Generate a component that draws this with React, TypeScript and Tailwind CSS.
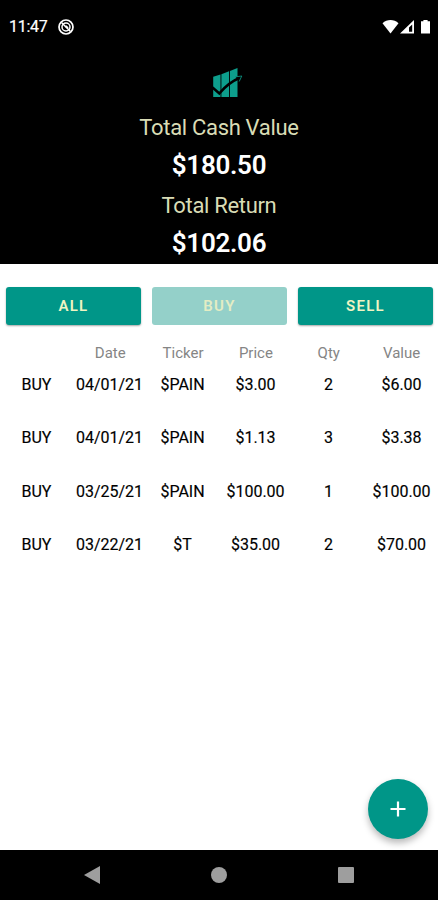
import React, { useState } from 'react';

type Transaction = {
  type: string;
  date: string;
  ticker: string;
  price: string;
  qty: number;
  value: string;
};

const transactions: Transaction[] = [
  { type: 'BUY', date: '04/01/21', ticker: '$PAIN', price: '$3.00', qty: 2, value: '$6.00' },
  { type: 'BUY', date: '04/01/21', ticker: '$PAIN', price: '$1.13', qty: 3, value: '$3.38' },
  { type: 'BUY', date: '03/25/21', ticker: '$PAIN', price: '$100.00', qty: 1, value: '$100.00' },
  { type: 'BUY', date: '03/22/21', ticker: '$T', price: '$35.00', qty: 2, value: '$70.00' },
];

const filters = ['ALL', 'BUY', 'SELL'];
const columns = ['', 'Date', 'Ticker', 'Price', 'Qty', 'Value'];

const StatusBar: React.FC = () => (
  <div className="flex h-[54px] items-center justify-between pl-[9px] pr-[7px] text-white">
    <div className="flex items-center gap-[11px]">
      <span className="text-[16px] leading-[20px] tracking-[-0.3px] [-webkit-text-stroke:0.2px_#fff]">11:47</span>
      <svg width="16" height="16" viewBox="0 0 16 16" fill="none" stroke="currentColor">
        <circle cx="8" cy="8" r="7" strokeWidth="1.7" />
        <circle cx="8" cy="8" r="4" strokeWidth="1.5" />
        <path d="M3.5 3.5l9 9" strokeWidth="1.5" />
        <path d="M7.5 7l2.5 2" strokeWidth="2" />
      </svg>
    </div>
    <svg width="49" height="16" viewBox="0 0 49 16" fill="currentColor">
      <path d="M0.5 4.3C5-.1 12-.1 16.5 4.3L8.5 14.5z" />
      <path d="M18 14.5L32 1v13.5zM27 12.8h3.2V5.5L27 8.6z" fillRule="evenodd" />
      <path d="M39 2.3h2.4V1h4.2v1.3H48v12.2h-9z" />
    </svg>
  </div>
);

const Logo: React.FC = () => (
  <svg width="32" height="31" viewBox="0 0 32 31">
    <g fill="#0d9e8c">
      <path d="M1.2 9.8L8.5 7.5V30H1.2z" />
      <path d="M9.4 7.2L17 4.3V30H9.4z" />
      <path d="M17.9 4L25.5 1v29h-7.6z" />
    </g>
    <path d="M.5 20.5L7.3 26.5C13 19.5 20 14 28.5 10.5" fill="none" stroke="#000" strokeWidth="2.6" />
    <path d="M23.5 9.8l6.3-.8-2.6 5.5" fill="#000" stroke="#0d9e8c" strokeWidth="0.8" />
  </svg>
);

// Một dòng gồm nhãn và số tiền
const Total: React.FC<{ label: string; amount: string }> = ({ label, amount }) => (
  <div className="flex h-[78px] flex-col items-center">
    <div className="text-[22px] leading-[34px] tracking-[-0.32px] text-[#d9dcb5]">{label}</div>
    <div className="text-[26px] font-semibold leading-[40px] tracking-[-0.3px] text-white">{amount}</div>
  </div>
);

export default function App() {
  const [selected, setSelected] = useState('BUY');

  const rows = transactions.filter((t) => selected === 'ALL' || t.type === selected);

  return (
    <div className="flex h-[900px] w-[438px] flex-col overflow-hidden bg-white font-['Roboto',sans-serif]">
      <header className="h-[264px] shrink-0 bg-black">
        <StatusBar />
        <div className="flex flex-col items-center pt-[13px]">
          <div className="pl-[18px]">
            <Logo />
          </div>
          <div className="pt-[13px]">
            <Total label="Total Cash Value" amount="$180.50" />
            <Total label="Total Return" amount="$102.06" />
          </div>
        </div>
      </header>

      <main className="relative flex-1">
        <div className="flex gap-[11px] pl-[6px] pr-[5px] pt-[23px]">
          {filters.map((f) => (
            <button
              key={f}
              onClick={() => setSelected(f)}
              className={`h-[38px] flex-1 rounded-[3px] text-[15px] font-semibold tracking-[1.25px] ${
                selected === f
                  ? 'bg-[#94d0c9] text-[#e4edc4]'
                  : 'bg-[#009688] text-[#f0f4c3] shadow-[0_1px_2px_rgba(0,0,0,0.35)]'
              }`}
            >
              {f}
            </button>
          ))}
        </div>

        <div className="grid grid-cols-6 pl-px pt-[18px] text-center text-[15px] leading-[20px] text-[#858585]">
          {columns.map((c) => (
            <div key={c}>{c}</div>
          ))}
        </div>

        <div className="pt-[11px] text-center text-[16px] leading-[22px] text-black [-webkit-text-stroke:0.15px_#000]">
          {rows.map((t, i) => (
            <div key={i} className="grid h-[53.3px] grid-cols-6">
              <div>{t.type}</div>
              <div>{t.date}</div>
              <div>{t.ticker}</div>
              <div>{t.price}</div>
              <div>{t.qty}</div>
              <div>{t.value}</div>
            </div>
          ))}
        </div>

        <button className="absolute bottom-[11px] right-[10px] flex h-[60px] w-[60px] items-center justify-center rounded-full bg-[#009688] shadow-[0_4px_7px_rgba(0,0,0,0.28)]">
          <svg width="16" height="16" viewBox="0 0 16 16" stroke="#fff" strokeWidth="2.2">
            <path d="M8 .5v15M.5 8h15" />
          </svg>
        </button>
      </main>

      <nav className="flex h-[50px] shrink-0 items-center justify-between bg-black pl-[84px] pr-[84px] text-[#9e9e9e]">
        <svg width="16" height="18" viewBox="0 0 16 18" fill="currentColor">
          <path d="M0 9L16 0v18z" />
        </svg>
        <div className="h-4 w-4 rounded-full bg-[#9e9e9e]" />
        <div className="h-4 w-4 rounded-[1px] bg-[#9e9e9e]" />
      </nav>
    </div>
  );
}
